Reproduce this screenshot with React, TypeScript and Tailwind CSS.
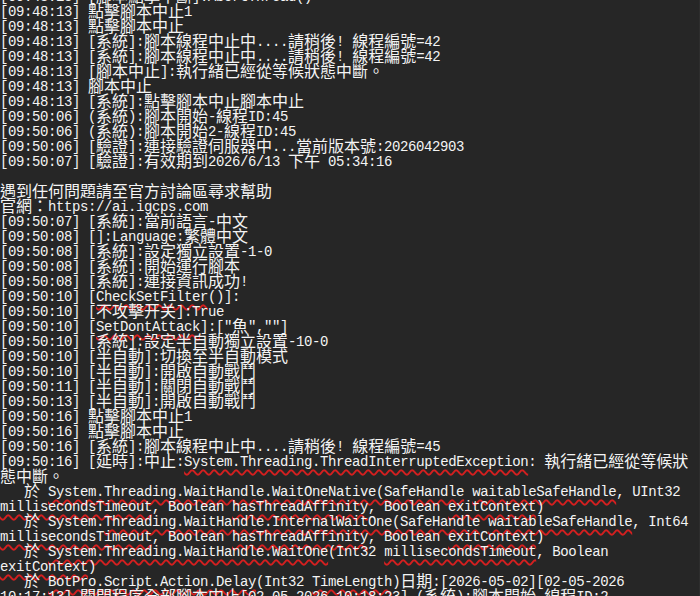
import React from "react";

// {...} marks a span that carries the red spell-check squiggle
const LINES: string[] = [
  "[09:48:13] [腳本點擊中斷]:AbortThread()",
  "[09:48:13] 點擊腳本中止1",
  "[09:48:13] 點擊腳本中止",
  "[09:48:13] [系統]:腳本線程中止中....請稍後! 線程編號=42",
  "[09:48:13] [系統]:腳本線程中止中....請稍後! 線程編號=42",
  "[09:48:13] [腳本中止]:執行緒已經從等候狀態中斷。",
  "[09:48:13] 腳本中止",
  "[09:48:13] [系統]:點擊腳本中止腳本中止",
  "[09:50:06] (系統):腳本開始-線程ID:45",
  "[09:50:06] (系統):腳本開始2-線程ID:45",
  "[09:50:06] [驗證]:連接驗證伺服器中...當前版本號:2026042903",
  "[09:50:07] [驗證]:有效期到2026/6/13 下午 05:34:16",
  "",
  "遇到任何問題請至官方討論區尋求幫助",
  "官網：https://ai.igcps.com",
  "[09:50:07] [系統]:當前語言-中文",
  "[09:50:08] []:Language:繁體中文",
  "[09:50:08] [系統]:設定獨立設置-1-0",
  "[09:50:08] [系統]:開始運行腳本",
  "[09:50:08] [系統]:連接資訊成功!",
  "[09:50:10] [{CheckSetFilter}()]:",
  "[09:50:10] [不攻擊开关]:True",
  '[09:50:10] [{SetDontAttack}]:["魚",""]',
  "[09:50:10] [系統]:設定半自動獨立設置-10-0",
  "[09:50:10] [半自動]:切換至半自動模式",
  "[09:50:10] [半自動]:開啟自動戰鬥",
  "[09:50:11] [半自動]:關閉自動戰鬥",
  "[09:50:13] [半自動]:開啟自動戰鬥",
  "[09:50:16] 點擊腳本中止1",
  "[09:50:16] 點擊腳本中止",
  "[09:50:16] [系統]:腳本線程中止中....請稍後! 線程編號=45",
  "[09:50:16] [延時]:中止:{System.Threading.ThreadInterruptedException}: 執行緒已經從等候狀",
  "態中斷。",
  "   於 {System.Threading.WaitHandle.WaitOneNative(SafeHandle} {waitableSafeHandle}, UInt32",
  "{millisecondsTimeout}, Boolean {hasThreadAffinity}, Boolean {exitContext})",
  "   於 System.{Threading.WaitHandle.InternalWaitOne(SafeHandle} {waitableSafeHandle}, Int64",
  "{millisecondsTimeout}, Boolean {hasThreadAffinity}, Boolean {exitContext})",
  "   於 {System.Threading.WaitHandle.WaitOne}(Int32 {millisecondsTimeout}, Boolean",
  "{exitContext})",
  "   於 {BotPro.Script.Action.Delay}(Int32 {TimeLength})日期:[2026-05-02][02-05-2026",
  "10:17:13] 關閉程序全部腳本中止[02-05-2026 10:18:23] (系統):腳本開始 線程ID:2",
];

const WIDE = /([\u2E80-\u9FFF\uF900-\uFAFF\uFF00-\uFFEF\u3000-\u303F]+)/;

function Run({ text, wavy }: { text: string; wavy: boolean }) {
  return (
    <>
      {text.split(WIDE).map((part, i) =>
        part === "" ? null : WIDE.test(part) ? (
          <span key={i} className="font-['Noto_Sans_CJK_TC','Noto_Sans_CJK_SC',sans-serif] text-[16px] leading-[15px] align-[-1px]">
            {part}
          </span>
        ) : (
          <span
            key={i}
            className={
              wavy
                ? "font-['Liberation_Mono',monospace] text-[14px] leading-[15px] tracking-[-0.4px] underline decoration-wavy decoration-[#d41f1f] decoration-[1.5px] underline-offset-[3px]"
                : "font-['Liberation_Mono',monospace] text-[14px] leading-[15px] tracking-[-0.4px]"
            }
          >
            {part}
          </span>
        )
      )}
    </>
  );
}

function LogLine({ line }: { line: string }) {
  const pieces = line.split(/(\{[^}]*\})/);
  return (
    <div className="h-[15px] leading-[15px] whitespace-pre text-[#f4f4f4]">
      {pieces.map((p, i) =>
        p.startsWith("{") ? <Run key={i} text={p.slice(1, -1)} wavy /> : <Run key={i} text={p} wavy={false} />
      )}
    </div>
  );
}

export default function App() {
  return (
    <div className="w-[700px] h-[596px] overflow-hidden bg-[#262626] border-r border-[#2d2d2d]">
      <div className="mt-[-12px] flex flex-col">
        {LINES.map((l, i) => (
          <LogLine key={i} line={l} />
        ))}
      </div>
    </div>
  );
}
